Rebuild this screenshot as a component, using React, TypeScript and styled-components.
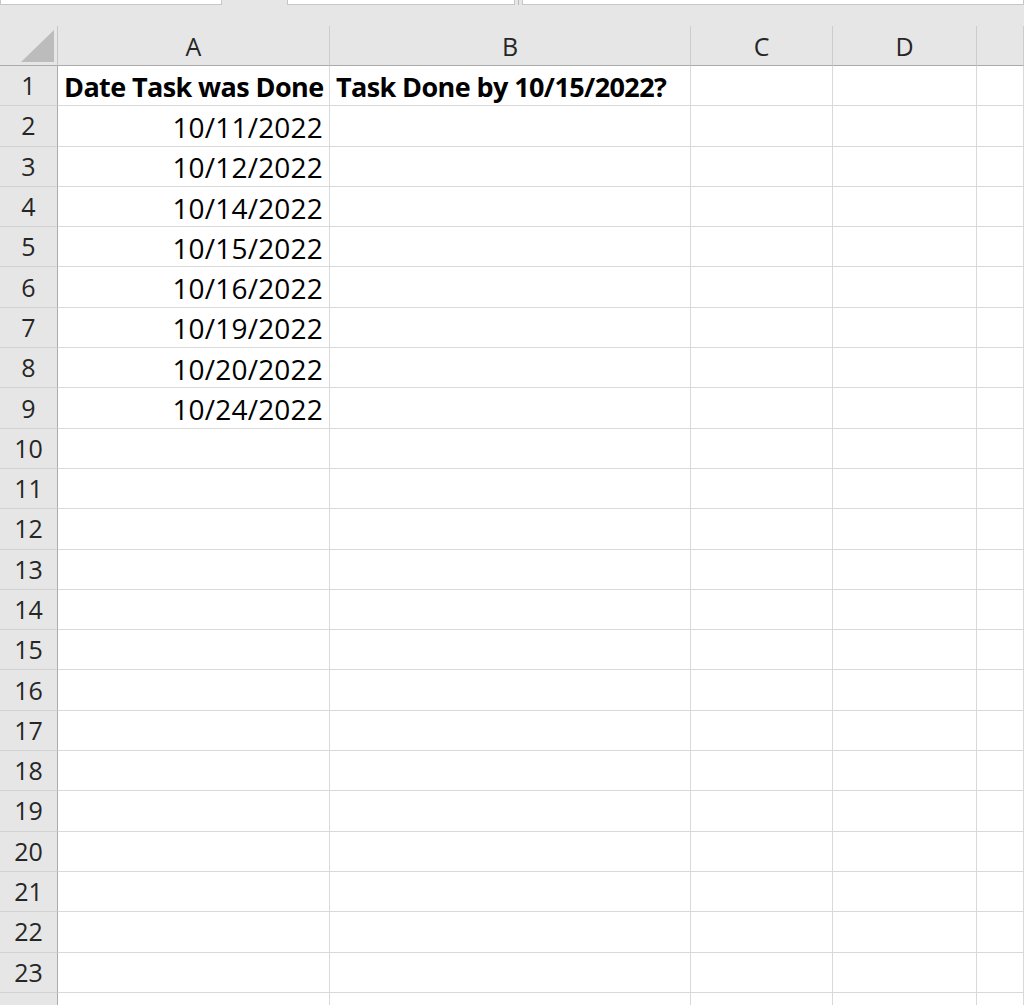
import React from "react";
import styled, { createGlobalStyle } from "styled-components";

const COLUMNS = ["A", "B", "C", "D", ""];
const ROW_COUNT = 23;

const dates = [
  "10/11/2022",
  "10/12/2022",
  "10/14/2022",
  "10/15/2022",
  "10/16/2022",
  "10/19/2022",
  "10/20/2022",
  "10/24/2022",
];

const GlobalStyle = createGlobalStyle`
  html, body {
    margin: 0;
    padding: 0;
    background: #ffffff;
    overflow: hidden;
  }
  body {
    font-family: "Open Sans", "Noto Sans", sans-serif;
  }
`;

const App = () => {
  // one extra unnumbered row fills the space under row 23
  const rows = Array.from({ length: ROW_COUNT + 1 }, (_, i) => i + 1);

  return (
    <>
      <GlobalStyle />
      <Window>
        <FormulaStrip>
          <InputBox $width={222} />
          <Gap $width={65} />
          <InputBox $width={228} />
          <Divider />
          <InputBox $grow />
        </FormulaStrip>
        <Grid>
          <Corner>
            <SelectAll />
          </Corner>
          {COLUMNS.map((c, i) => (
            <ColHeader key={`h${i}`}>{c}</ColHeader>
          ))}
          {rows.map((r) => (
            <React.Fragment key={r}>
              <RowHeader>{r <= ROW_COUNT ? r : ""}</RowHeader>
              {COLUMNS.map((_, ci) => {
                if (r === 1 && ci === 0)
                  return <Cell key={ci} $bold>Date Task was Done</Cell>;
                if (r === 1 && ci === 1)
                  return <Cell key={ci} $bold>Task Done by 10/15/2022?</Cell>;
                if (ci === 0 && r >= 2 && r - 2 < dates.length)
                  return (
                    <Cell key={ci} $align="right">
                      {dates[r - 2]}
                    </Cell>
                  );
                return <Cell key={ci} />;
              })}
            </React.Fragment>
          ))}
        </Grid>
      </Window>
    </>
  );
};

const Window = styled.div`
  width: 1024px;
  height: 1005px;
  background: #e6e6e6;
  overflow: hidden;
`;

const FormulaStrip = styled.div`
  display: flex;
  height: 26px;
  align-items: flex-start;
`;

const InputBox = styled.div<{ $width?: number; $grow?: boolean }>`
  height: 4px;
  background: #ffffff;
  border: 1px solid #c6c6c6;
  border-top: none;
  box-sizing: content-box;
  width: ${({ $width }) => ($width ? `${$width - 2}px` : "auto")};
  flex: ${({ $grow }) => ($grow ? "1" : "none")};
`;

const Gap = styled.div<{ $width: number }>`
  width: ${({ $width }) => $width}px;
`;

const Divider = styled.div`
  width: 7px;
  height: 5px;
  display: flex;
  justify-content: center;
  &::after {
    content: "";
    width: 1px;
    height: 5px;
    background: #b8b8b8;
  }
`;

const Grid = styled.div`
  display: grid;
  grid-template-columns: 58px 272px 361px 142px 144px 1fr;
  grid-template-rows: 40px;
  grid-auto-rows: 40.3px;
`;

const Corner = styled.div`
  position: relative;
  background: #e6e6e6;
  border-right: 1px solid #c6c6c6;
  border-bottom: 1px solid #ababab;
`;

const SelectAll = styled.div`
  position: absolute;
  right: 3px;
  bottom: 3px;
  width: 33px;
  height: 32px;
  background: #bcbcbc;
  clip-path: polygon(100% 0, 100% 100%, 0 100%);
`;

const ColHeader = styled.div`
  display: flex;
  align-items: center;
  justify-content: center;
  background: #e6e6e6;
  border-right: 1px solid #cdcdcd;
  border-bottom: 1px solid #ababab;
  color: #262626;
  font-size: 25px;
`;

const RowHeader = styled.div`
  display: flex;
  align-items: center;
  justify-content: center;
  background: #e6e6e6;
  border-right: 1px solid #ababab;
  border-bottom: 1px solid #d2d2d2;
  color: #262626;
  font-size: 25px;
  line-height: 1;
`;

const Cell = styled.div<{ $bold?: boolean; $align?: "left" | "right" }>`
  display: flex;
  align-items: center;
  justify-content: ${({ $align }) => ($align === "right" ? "flex-end" : "flex-start")};
  padding: 2px 6px 0 6px;
  background: #ffffff;
  border-right: 1px solid #d9d9d9;
  border-bottom: 1px solid #d9d9d9;
  color: #000000;
  font-size: ${({ $bold }) => ($bold ? "27px" : "28px")};
  font-weight: ${({ $bold }) => ($bold ? 700 : 400)};
  letter-spacing: ${({ $bold }) => ($bold ? "-0.6px" : "0.2px")};
  white-space: nowrap;
  overflow: visible;
  min-width: 0;
  line-height: 1;
`;

export default App;
